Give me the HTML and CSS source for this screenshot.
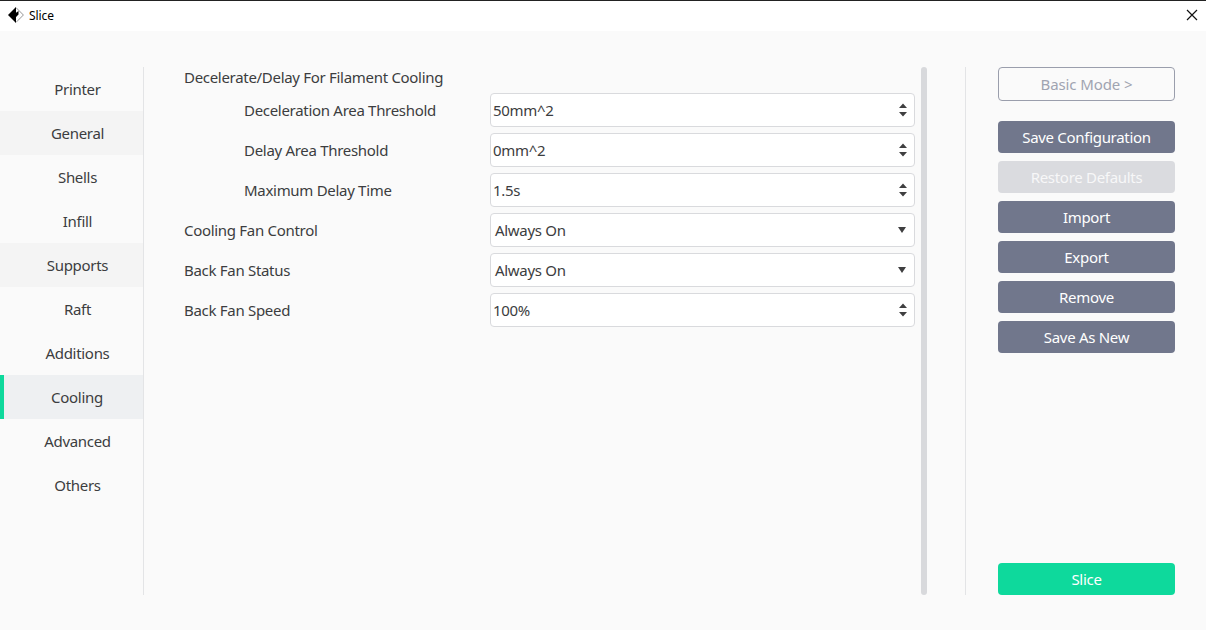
FILE: index.html
```html
<!DOCTYPE html>
<html lang="en">
<head>
<meta charset="utf-8">
<title>Slice</title>
<link rel="stylesheet" href="styles.css">
</head>
<body>
<div class="window">
  <header class="titlebar">
    <svg class="logo" width="16" height="16" viewBox="0 0 16 16"><path d="M8 .6 15.4 8 8 15.4" fill="#fff" stroke="#666" stroke-width=".7"/><path d="M8 0v5.800L10.500 4v3.500L8 10v6L0 8z" fill="#000"/></svg>
    <span class="title">Slice</span>
    <svg class="close" width="12" height="12" viewBox="0 0 12 12"><path d="M1 1l10 10M11 1L1 11" stroke="#111" stroke-width="1.2"/></svg>
  </header>
  <main class="body">
    <nav class="nav">
      <a class="tab">Printer</a>
      <a class="tab shaded">General</a>
      <a class="tab">Shells</a>
      <a class="tab">Infill</a>
      <a class="tab shaded">Supports</a>
      <a class="tab">Raft</a>
      <a class="tab">Additions</a>
      <a class="tab active">Cooling</a>
      <a class="tab">Advanced</a>
      <a class="tab">Others</a>
    </nav>
    <section class="settings">
      <h2 class="heading">Decelerate/Delay For Filament Cooling</h2>
      <div class="row"><span class="label sub">Deceleration Area Threshold</span><div class="field">50mm^2<svg class="spin" width="8" height="14" viewBox="0 0 8 14"><path d="M0 5 4 .5 8 5zM0 9h8l-4 4.5z"/></svg></div></div>
      <div class="row"><span class="label sub">Delay Area Threshold</span><div class="field">0mm^2<svg class="spin" width="8" height="14" viewBox="0 0 8 14"><path d="M0 5 4 .5 8 5zM0 9h8l-4 4.5z"/></svg></div></div>
      <div class="row"><span class="label sub">Maximum Delay Time</span><div class="field">1.5s<svg class="spin" width="8" height="14" viewBox="0 0 8 14"><path d="M0 5 4 .5 8 5zM0 9h8l-4 4.5z"/></svg></div></div>
      <div class="row"><span class="label">Cooling Fan Control</span><div class="field select">Always On<svg class="arrow" width="8" height="6" viewBox="0 0 8 6"><path d="M0 0h8L4 6z"/></svg></div></div>
      <div class="row"><span class="label">Back Fan Status</span><div class="field select">Always On<svg class="arrow" width="8" height="6" viewBox="0 0 8 6"><path d="M0 0h8L4 6z"/></svg></div></div>
      <div class="row"><span class="label">Back Fan Speed</span><div class="field">100%<svg class="spin" width="8" height="14" viewBox="0 0 8 14"><path d="M0 5 4 .5 8 5zM0 9h8l-4 4.5z"/></svg></div></div>
    </section>
    <div class="scrollbar"></div>
    <aside class="actions">
      <button class="btn outline">Basic Mode &gt;</button>
      <button class="btn">Save Configuration</button>
      <button class="btn disabled">Restore Defaults</button>
      <button class="btn">Import</button>
      <button class="btn">Export</button>
      <button class="btn">Remove</button>
      <button class="btn">Save As New</button>
      <button class="btn slice">Slice</button>
    </aside>
  </main>
</div>
</body>
</html>
```
FILE: styles.css
```css
* { box-sizing: border-box; }
body { margin: 0; background: #fafafa; color: #3c3d40; font: 15px/20px "Noto Sans", sans-serif; letter-spacing: -0.3px; }
.window { height: 630px; display: flex; flex-direction: column; }
.titlebar { height: 31px; background: #fff; border-top: 1px solid #222; display: flex; align-items: center; padding: 0 8px 1px 8px; color: #000; font-size: 12px; letter-spacing: -0.1px; }
.logo { margin-bottom: 1px; }
.title { margin-left: 5px; }
.close { margin: 0 0 2px auto; }
.body { flex: 1; display: flex; padding: 36px 31px 35px 0; }
.nav { width: 144px; border-right: 1px solid #e3e4e6; display: flex; flex-direction: column; }
.tab { height: 44px; display: flex; align-items: center; justify-content: center; padding: 0 0 0 12px; }
.shaded { background: #f4f4f4; }
.active { background: #eef0f2; border-left: 4px solid #0ed99c; padding-left: 7px; }
.settings { width: 771px; padding-left: 40px; }
.heading { margin: 0 0 6px; font-size: inherit; font-weight: 400; height: 20px; }
.row { display: flex; align-items: center; height: 34px; margin-bottom: 6px; }
.label { width: 306px; }
.sub { padding-left: 60px; }
.field { flex: 1; height: 34px; display: flex; align-items: center; justify-content: space-between; background: #fff; border: 1px solid #d9dadd; border-radius: 4px; padding: 0 7px 1px 2px; }
.select { padding-left: 4px; padding-right: 8px; }
.spin, .arrow { fill: #3f3f40; display: block; margin-bottom: -1px; }
.scrollbar { width: 6px; margin-left: 6px; border-radius: 3px; background: #d8d9dc; }
.actions { margin-left: 38px; flex: 1; border-left: 1px solid #e3e4e6; padding-left: 32px; display: flex; flex-direction: column; gap: 8px; }
.btn { height: 32px; flex: none; border: 0; border-radius: 4px; background: #71778c; color: #fff; font: inherit; letter-spacing: inherit; padding: 0 0 1px; }
.outline { height: 34px; margin-bottom: 12px; background: transparent; border: 1px solid #9a9eac; color: #a0a4b1; letter-spacing: -0.1px; }
.disabled { background: #dadbdf; color: #f7f7f8; }
.slice { margin-top: auto; background: #0ed99c; }
```
